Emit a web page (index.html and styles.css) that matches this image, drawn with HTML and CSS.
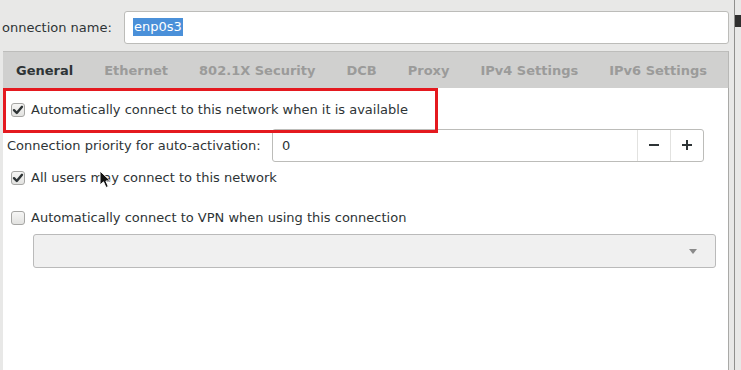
FILE: index.html
```html
<!DOCTYPE html>
<html>
<head>
<meta charset="utf-8">
<link rel="stylesheet" href="styles.css">
</head>
<body>
<div class="window">
  <div class="main">
    <div class="name-row">
      <span class="name-label">onnection name:</span>
      <div class="name-input"><span class="sel">enp0s3</span></div>
    </div>
    <div class="tabs">
      <span class="tab active">General</span>
      <span class="tab">Ethernet</span>
      <span class="tab">802.1X Security</span>
      <span class="tab">DCB</span>
      <span class="tab">Proxy</span>
      <span class="tab">IPv4 Settings</span>
      <span class="tab">IPv6 Settings</span>
    </div>
    <div class="panel">
      <div class="annot"></div>
      <label class="check-row r1">
        <span class="box checked"><svg viewBox="0 0 14 14" width="14" height="14"><path d="M3 7.2 L5.8 10 L11 3.8" fill="none" stroke="#2e3436" stroke-width="2.4" stroke-linecap="round" stroke-linejoin="round"/></svg></span>
        <span>Automatically connect to this network when it is available</span>
      </label>
      <div class="prio-row">
        <span class="prio-label">Connection priority for auto-activation:</span>
        <div class="spin">
          <span class="spin-val">0</span>
          <span class="spin-btn"><svg viewBox="0 0 12 12" width="12" height="12"><path d="M1 6 H11" stroke="#2e3436" stroke-width="2"/></svg></span>
          <span class="spin-btn"><svg viewBox="0 0 12 12" width="12" height="12"><path d="M1 6 H11 M6 1 V11" stroke="#2e3436" stroke-width="2"/></svg></span>
        </div>
      </div>
      <label class="check-row r3">
        <span class="box checked"><svg viewBox="0 0 14 14" width="14" height="14"><path d="M3 7.2 L5.8 10 L11 3.8" fill="none" stroke="#2e3436" stroke-width="2.4" stroke-linecap="round" stroke-linejoin="round"/></svg></span>
        <span>All users may connect to this network</span>
      </label>
      <label class="check-row r4">
        <span class="box"></span>
        <span>Automatically connect to VPN when using this connection</span>
      </label>
      <div class="combo"><svg class="arrow" viewBox="0 0 8 5" width="8" height="5"><path d="M0 0 H8 L4 5 Z" fill="#8a8a8a"/></svg></div>
      <svg class="cursor" viewBox="0 0 13 19" width="13" height="19"><path d="M1 1 L1 15 L4.5 11.8 L7 17.5 L9.3 16.5 L6.9 11 L11.5 11 Z" fill="#111" stroke="#fff" stroke-width="1" stroke-linejoin="round"/></svg>
    </div>
  </div>
  <div class="edge">
    <div class="edge-gap"></div>
    <div class="edge-line"></div>
    <div class="edge-bar"><div class="edge-knob"></div></div>
  </div>
</div>
</body>
</html>
```

FILE: styles.css
```css
* { box-sizing: border-box; }
html, body { margin: 0; padding: 0; }
body {
  background: #e8e8e7;
  font-family: "DejaVu Sans", sans-serif;
  font-size: 13px;
  color: #2e3436;
  width: 741px;
  height: 370px;
  overflow: hidden;
}
.window {
  display: flex;
  height: 370px;
}
.main {
  width: 729px;
  display: flex;
  flex-direction: column;
}
.name-row {
  height: 51px;
  display: flex;
  align-items: center;
  padding-top: 3px;
}
.name-label {
  margin-left: 2px;
  width: 122px;
  flex: none;
  white-space: nowrap;
}
.name-input {
  flex: 1;
  height: 33px;
  background: #fff;
  border: 1px solid #bcbcb9;
  border-radius: 3px;
  display: flex;
  align-items: center;
  padding-left: 8px;
}
.sel {
  background: #4a90d9;
  color: #fff;
  line-height: 18px;
  padding: 0 1px;
}
.tabs {
  margin-left: 3px;
  height: 37px;
  background: #d0d0cf;
  border-top: 1px solid #bdbdbb;
  border-right: 1px solid #b8b8b6;
  display: flex;
  align-items: center;
  gap: 31px;
  padding-left: 13px;
  padding-top: 1px;
}
.tab {
  font-weight: bold;
  color: #9b9b9a;
  white-space: nowrap;
}
.tab.active { color: #2e3436; }
.panel {
  position: relative;
  margin-left: 3px;
  flex: 1;
  background: #fff;
  border-right: 1px solid #a9a9a7;
  padding-left: 8px;
  display: flex;
  flex-direction: column;
}
.annot {
  position: absolute;
  left: 0;
  top: 0;
  width: 435px;
  height: 45px;
  border: 3px solid #e4191f;
}
.check-row {
  display: flex;
  align-items: center;
  gap: 6px;
  height: 14px;
  line-height: 14px;
  white-space: nowrap;
}
.r1 { margin-top: 15px; }
.r3 { margin-top: 10px; }
.r4 { margin-top: 26px; }
.box {
  width: 14px;
  height: 14px;
  flex: none;
  border: 1px solid #a6a6a4;
  border-radius: 3px;
  background: linear-gradient(#f6f6f5, #e2e2e0);
  display: flex;
  align-items: center;
  justify-content: center;
}
.box svg { display: block; margin: -1px; }
.prio-row {
  margin-top: 12px;
  height: 32px;
  display: flex;
  align-items: center;
}
.prio-label {
  margin-left: -4px;
  width: 265px;
  flex: none;
  white-space: nowrap;
}
.spin {
  width: 432px;
  height: 33px;
  border: 1px solid #bcbcb9;
  border-radius: 3px;
  display: flex;
  align-items: stretch;
}
.spin-val {
  flex: 1;
  display: flex;
  align-items: center;
  padding-left: 9px;
}
.spin-btn {
  width: 33px;
  border-left: 1px solid #e2e2e0;
  display: flex;
  align-items: center;
  justify-content: center;
}
.spin-btn svg { display: block; }
.combo {
  margin-top: 9px;
  margin-left: 22px;
  width: 683px;
  height: 34px;
  background: #f0f0f0;
  border: 1px solid #bababa;
  border-radius: 3px;
  display: flex;
  align-items: center;
  justify-content: flex-end;
  padding-right: 18px;
}
.arrow { display: block; }
.cursor {
  position: absolute;
  left: 96px;
  top: 82px;
}
.edge {
  width: 12px;
  display: flex;
}
.edge-gap { width: 5px; }
.edge-line { width: 1px; background: #8f8f8d; }
.edge-bar {
  flex: 1;
  padding-top: 15px;
}
.edge-knob {
  height: 12px;
  background: #2f2f2f;
}
```
